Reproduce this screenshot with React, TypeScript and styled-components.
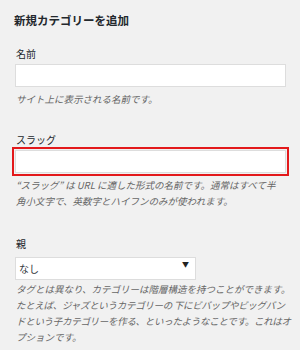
import styled, { createGlobalStyle } from "styled-components";

const GlobalStyle = createGlobalStyle`
  body {
    margin: 0;
    background: #f1f1f1;
    font-family: "Noto Sans CJK JP", "Liberation Sans", sans-serif;
  }
`;

const Wrapper = styled.div`
  width: 300px;
  height: 350px;
  overflow: hidden;
  padding: 12px 8px 0 15px;
  box-sizing: border-box;
`;

const Heading = styled.h2`
  margin: 0 0 19px -1px;
  font-size: 11.5px;
  line-height: 16px;
  font-weight: 700;
  color: #23282d;
`;

const Field = styled.div<{ $gap: number }>`
  display: flex;
  flex-direction: column;
  margin-bottom: ${(p) => p.$gap}px;
`;

const Label = styled.label`
  font-size: 10px;
  line-height: 14px;
  color: #23282d;
  margin: 0 0 3px 1px;
`;

const Input = styled.input<{ $focus?: boolean }>`
  width: 271px;
  height: 23px;
  box-sizing: border-box;
  border: 1px solid #dddddd;
  background: #fff;
  margin: 0;
  outline: ${(p) => (p.$focus ? "2px solid #e3191b" : "none")};
  outline-offset: 1px;
`;

const SelectBox = styled.div`
  position: relative;
  width: 181px;
  height: 23px;
`;

const Select = styled.select`
  width: 100%;
  height: 100%;
  appearance: none;
  border: 1px solid #dddddd;
  background: #fff;
  font-family: inherit;
  font-size: 10px;
  color: #32373c;
  padding: 0 3px;
  border-radius: 0;
  outline: none;
`;

const Arrow = styled.span`
  position: absolute;
  right: 7px;
  top: 5px;
  font-size: 7px;
  color: #222;
  pointer-events: none;
`;

const Desc = styled.p`
  margin: 4px 0 0 1px;
  font-size: 9.5px;
  line-height: 16px;
  font-style: italic;
  color: #666;
  white-space: nowrap;
`;

const Line = styled.span<{ $tight?: number }>`
  display: block;
  letter-spacing: ${(p) => p.$tight ?? 0}px;
`;

export default function App() {
  return (
    <Wrapper>
      <GlobalStyle />
      <Heading>新規カテゴリーを追加</Heading>
      <Field $gap={26}>
        <Label>名前</Label>
        <Input type="text" />
        <Desc>サイト上に表示される名前です。</Desc>
      </Field>
      <Field $gap={28}>
        <Label>スラッグ</Label>
        <Input type="text" $focus />
        <Desc>
          <Line>“スラッグ” は URL に適した形式の名前です。通常はすべて半</Line>
          <Line>角小文字で、英数字とハイフンのみが使われます。</Line>
        </Desc>
      </Field>
      <Field $gap={0}>
        <Label>親</Label>
        <SelectBox>
          <Select defaultValue="none">
            <option value="none">なし</option>
          </Select>
          <Arrow>▼</Arrow>
        </SelectBox>
        <Desc>
          <Line>タグとは異なり、カテゴリーは階層構造を持つことができます。</Line>
          <Line $tight={-0.3}>たとえば、ジャズというカテゴリーの 下にビバップやビッグバン</Line>
          <Line $tight={-0.3}>ドという子カテゴリーを作る、といったようなことです。これはオ</Line>
          <Line>プションです。</Line>
        </Desc>
      </Field>
    </Wrapper>
  );
}
